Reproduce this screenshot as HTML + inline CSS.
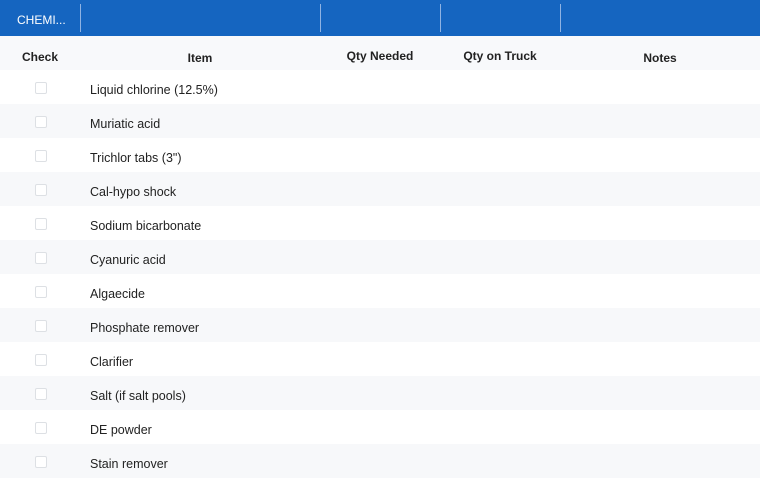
<!DOCTYPE html><html><head><style>
body{margin:0;width:760px;height:478px;overflow:hidden;background:#fff;font-family:"Liberation Sans",sans-serif;color:#222;}
.bar{position:absolute;left:0;top:0;width:760px;height:36px;background:#1565c0;}
.bar .t{position:absolute;left:17px;top:13px;color:#fff;font-size:12px;}
.sep{position:absolute;top:4px;width:1px;height:28px;background:#8fb3e3;}
.hdr{position:absolute;top:36px;left:0;width:760px;height:34px;background:#f8f9fb;font-weight:bold;font-size:12px;color:#222;}
.hdr span{position:absolute;transform:translateX(-50%);}
.row{position:absolute;left:0;width:760px;height:34px;font-size:12.5px;}
.row.g{background:#f7f8fa;}
.cb{position:absolute;left:35px;top:12px;width:10px;height:10px;border:1px solid #dde0e4;border-radius:2px;background:#fff;}
.row .n{position:absolute;left:90px;top:13px;}
</style></head><body>
<div class="bar"><div class="t">CHEMI...</div>
<div class="sep" style="left:80px"></div><div class="sep" style="left:320px"></div><div class="sep" style="left:440px"></div><div class="sep" style="left:560px"></div></div>
<div class="hdr"><span style="left:40px;top:14px">Check</span><span style="left:200px;top:15px">Item</span><span style="left:380px;top:13px">Qty Needed</span><span style="left:500px;top:13px">Qty on Truck</span><span style="left:660px;top:15px">Notes</span></div>
<div class="row" style="top:70px"><div class="cb"></div><div class="n">Liquid chlorine (12.5%)</div></div>
<div class="row g" style="top:104px"><div class="cb"></div><div class="n">Muriatic acid</div></div>
<div class="row" style="top:138px"><div class="cb"></div><div class="n">Trichlor tabs (3")</div></div>
<div class="row g" style="top:172px"><div class="cb"></div><div class="n">Cal-hypo shock</div></div>
<div class="row" style="top:206px"><div class="cb"></div><div class="n">Sodium bicarbonate</div></div>
<div class="row g" style="top:240px"><div class="cb"></div><div class="n">Cyanuric acid</div></div>
<div class="row" style="top:274px"><div class="cb"></div><div class="n">Algaecide</div></div>
<div class="row g" style="top:308px"><div class="cb"></div><div class="n">Phosphate remover</div></div>
<div class="row" style="top:342px"><div class="cb"></div><div class="n">Clarifier</div></div>
<div class="row g" style="top:376px"><div class="cb"></div><div class="n">Salt (if salt pools)</div></div>
<div class="row" style="top:410px"><div class="cb"></div><div class="n">DE powder</div></div>
<div class="row g" style="top:444px"><div class="cb"></div><div class="n">Stain remover</div></div>
</body></html>
